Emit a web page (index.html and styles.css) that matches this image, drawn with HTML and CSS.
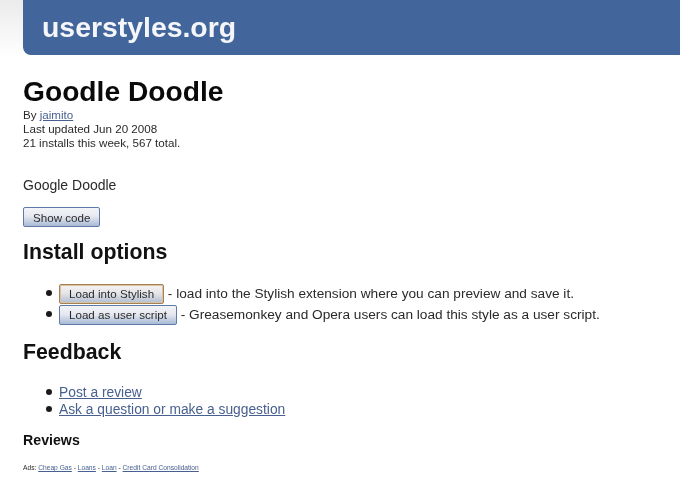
FILE: index.html
```html
<!DOCTYPE html>
<html lang="en">
<head>
    <meta charset="UTF-8">
    <meta name="viewport" content="width=device-width, initial-scale=1.0">
    <title>Goodle Doodle - userstyles.org</title>
    <link rel="stylesheet" href="styles.css">
</head>
<body>

    <div class="header">
        <div class="logo">userstyles.org</div>
    </div>

    <div class="content">
        <h1>Goodle Doodle</h1>
        <div class="meta">
            <div>By <a href="#">jaimito</a></div>
            <div>Last updated Jun 20 2008</div>
            <div>21 installs this week, 567 total.</div>
        </div>

        <p class="description">Google Doodle</p>

        <button class="btn show-code">Show code</button>

        <h2>Install options</h2>
        <ul class="install">
            <li><button class="btn btn-focus">Load into Stylish</button> - load into the Stylish extension where you can preview and save it.</li>
            <li><button class="btn">Load as user script</button> - Greasemonkey and Opera users can load this style as a user script.</li>
        </ul>

        <h2>Feedback</h2>
        <ul class="feedback">
            <li><a href="#">Post a review</a></li>
            <li><a href="#">Ask a question or make a suggestion</a></li>
        </ul>

        <h3>Reviews</h3>
        <div class="ads">Ads: <a href="#">Cheap Gas</a> - <a href="#">Loans</a> - <a href="#">Loan</a> - <a href="#">Credit Card Consolidation</a></div>
    </div>

</body>
</html>
```

FILE: styles.css
```css
* {
    margin: 0;
    padding: 0;
    box-sizing: border-box;
}
body {
    font-family: "Liberation Sans", Arial, sans-serif;
    color: #2a2a2a;
    background: linear-gradient(#ebebeb, #fff 58px) no-repeat;
    background-size: 23px 58px;
    overflow: hidden;
    filter: blur(0.3px);
}
a {
    color: #48608f;
}
.header {
    margin-left: 23px;
    height: 55px;
    padding: 10px 0 0 19px;
    background: #42659b;
    border-bottom-left-radius: 8px;
}
.logo {
    color: #f4f6f9;
    font-size: 28.4px;
    font-weight: bold;
    line-height: 34px;
}
.content {
    padding: 20px 0 0 23px;
}
h1 {
    color: #0a0a0a;
    font-size: 28.2px;
    line-height: 33px;
}
.meta {
    font-size: 11.6px;
    line-height: 14px;
}
.description {
    margin-top: 27px;
    font-size: 14px;
    line-height: 16px;
}
.btn {
    height: 20px;
    padding: 0 9px;
    font-family: "Liberation Sans", Arial, sans-serif;
    font-size: 11.6px;
    color: #2a2a2a;
    background: linear-gradient(#f3f4f7, #e6e9f0 45%, #a9bad6);
    border: 1px solid #5d7ba6;
    border-radius: 2px;
}
.btn-focus {
    background: linear-gradient(#f5f3f0, #e6e6e8 45%, #b0bdd2);
    border-color: #a67f52;
    box-shadow: 0 0 0 1px #d8c3a5 inset;
}
.show-code {
    display: block;
    margin-top: 14px;
}
h2 {
    margin-top: 13px;
    color: #111;
    font-size: 21.3px;
    line-height: 24px;
}
ul {
    margin-left: 36px;
    font-size: 13.66px;
    list-style: none;
}
li::before {
    content: "";
    display: inline-block;
    width: 6px;
    height: 6px;
    margin-left: -13px;
    margin-right: 7px;
    vertical-align: 2px;
    border-radius: 50%;
    background: #1a1a1a;
}
.install {
    margin-top: 19px;
}
.install li {
    height: 21px;
    line-height: 21px;
}
.install + h2 {
    margin-top: 15px;
}
.feedback {
    margin-top: 20px;
    font-size: 13.8px;
    line-height: 17px;
}
h3 {
    margin-top: 14px;
    color: #111;
    font-size: 14.2px;
    line-height: 16px;
}
.ads {
    margin-top: 15px;
    font-size: 6.66px;
    line-height: 9px;
}
```
